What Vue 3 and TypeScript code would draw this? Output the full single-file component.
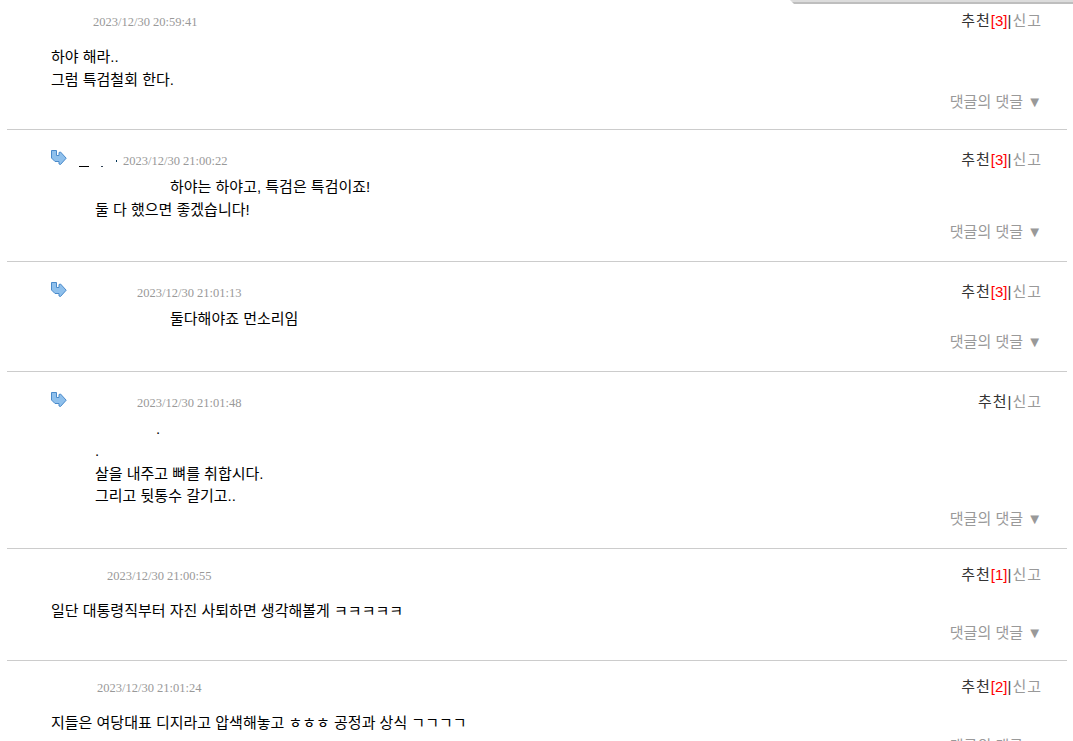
<script setup lang="ts">
interface Comment {
  id: number
  date: string
  votes?: number
  reply?: boolean
  author: string
  lead?: string
  lines: string[]
}

const comments: Comment[] = [
  { id: 1, date: '2023/12/30 20:59:41', votes: 3, author: 'w42', lines: ['하야 해라..', '그럼 특검철회 한다.'] },
  { id: 2, date: '2023/12/30 21:00:22', votes: 3, reply: true, author: 'w56', lead: 'full', lines: ['하야는 하야고, 특검은 특검이죠!', '둘 다 했으면 좋겠습니다!'] },
  { id: 3, date: '2023/12/30 21:01:13', votes: 3, reply: true, author: 'w70', lead: 'full', lines: ['둘다해야죠 먼소리임'] },
  { id: 4, date: '2023/12/30 21:01:48', reply: true, author: 'w70', lead: 'short', lines: ['.', '.', '살을 내주고 뼈를 취합시다.', '그리고 뒷통수 갈기고..'] },
  { id: 5, date: '2023/12/30 21:00:55', votes: 1, author: 'w56', lines: ['일단 대통령직부터 자진 사퇴하면 생각해볼게 ㅋㅋㅋㅋㅋ'] },
  { id: 6, date: '2023/12/30 21:01:24', votes: 2, author: 'w46', lines: ['지들은 여당대표 디지라고 압색해놓고 ㅎㅎㅎ 공정과 상식 ㄱㄱㄱㄱ'] },
]
</script>

<template>
  <main class="page">
    <div class="panel-edge"></div>
    <article v-for="c in comments" :key="c.id" class="comment" :class="{ reply: c.reply }">
      <header class="head">
        <svg v-if="c.reply" class="arrow" viewBox="0 0 16 16" width="16" height="16" aria-hidden="true">
          <path d="M.5 .5H5.5V5.5H8V2.5L9.5 2L15.2 8.2L9.5 14.5L8 14V11.5H4L.5 8Z" fill="#8fc0ec" stroke="#4a8aca" stroke-linejoin="round" />
        </svg>
        <span class="author" :class="c.author">
          <template v-if="c.id === 2"><i class="dash"></i><i class="tick"></i><i class="dot"></i></template>
        </span>
        <time class="date">{{ c.date }}</time>
        <span class="actions">
          <a class="vote" href="#">추천</a><span v-if="c.votes" class="count">[{{ c.votes }}]</span><span class="bar">|</span><a class="report" href="#">신고</a>
        </span>
      </header>
      <div class="body">
        <span v-if="c.lead" class="lead" :class="c.lead"></span><template v-for="(line, i) in c.lines" :key="i"><br v-if="i > 0">{{ line }}</template>
      </div>
      <footer class="foot"><button type="button" class="more">댓글의 댓글 ▼</button></footer>
    </article>
  </main>
</template>

<style>
body {
  margin: 0;
  background: #fff;
}
html {
  height: 100%;
  overflow: hidden;
}
</style>

<style scoped>
.page {
  position: relative;
  padding: 0 6px 0 7px;
  font-family: "Liberation Sans", "Noto Sans CJK KR", sans-serif;
  font-size: 15px;
  line-height: 1.5;
  color: #000;
}
.panel-edge {
  position: absolute;
  top: 0;
  left: 790px;
  right: 0;
  height: 4px;
  background: linear-gradient(#dcdcdc 50%, #bebebe 50%);
  clip-path: polygon(0 0, 100% 0, 100% 100%, 4px 100%);
}
.comment {
  padding: 15px 25px 15px 44px;
  border-bottom: 1px solid #ccc;
}
.comment:first-of-type {
  padding-top: 10px;
}
.comment.reply {
  padding-top: 19px;
  padding-bottom: 17px;
}
.head {
  display: flex;
  align-items: center;
  height: 23px;
  margin-bottom: 13px;
}
.reply .head {
  margin-bottom: 4px;
}
.arrow {
  flex: none;
  align-self: flex-start;
  margin-top: 1px;
}
.author {
  display: flex;
  height: 12px;
}
.w42 { width: 42px; }
.w46 { width: 46px; }
.w56 { width: 56px; }
.w70 { width: 70px; }
.dash {
  width: 10px;
  height: 1px;
  margin: 11px 12px 0;
  background: #000;
}
.tick {
  width: 2px;
  height: 1px;
  margin-top: 11px;
  background: #345;
}
.dot {
  width: 1px;
  height: 2px;
  margin: 5px 0 0 13px;
  background: #035;
}
.date {
  padding-top: 2px;
  font-family: "Liberation Serif", serif;
  font-size: smaller;
  color: #999;
}
.actions {
  display: flex;
  margin-left: auto;
}
.vote {
  color: #333;
  letter-spacing: 1px;
  text-decoration: none;
}
.count {
  color: #f00;
}
.bar {
  color: #333;
  letter-spacing: 1px;
}
.report {
  color: #999;
  letter-spacing: 1px;
  text-decoration: none;
}
.reply .body {
  padding-left: 44px;
}
.lead {
  display: inline-block;
}
.full { width: 75px; }
.short { width: 61px; }
.foot {
  display: flex;
  justify-content: flex-end;
  height: 23px;
}
.more {
  padding: 0;
  border: 0;
  background: none;
  font: inherit;
  color: #999;
}
</style>
